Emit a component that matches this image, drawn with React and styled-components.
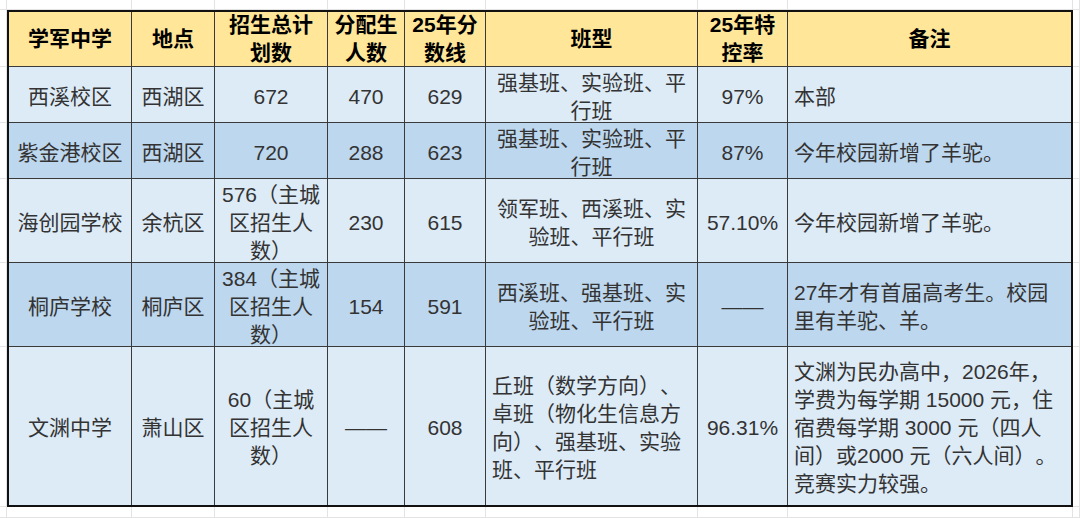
import React from "react";
import styled, { createGlobalStyle } from "styled-components";

const GlobalStyle = createGlobalStyle`
  html, body { margin: 0; padding: 0; background: #ffffff; }
  body { font-family: "Liberation Sans", "Noto Sans CJK SC", sans-serif; }
`;

// column widths (each includes its own 1px right rule)
const COLS = [123, 83, 113, 77, 81, 212, 90, 283];
// row heights (each includes its own 1px bottom rule)
const ROWS = [55, 56, 56, 84, 84, 158];
// spreadsheet grid-line tracks around the table
const GHOST_COLS = [7, 125, 83, 113, 77, 81, 212, 90, 285];
const GHOST_ROWS = [57, 56, 56, 84, 84, 160];

const HEAD = ["学军中学", "地点", "招生总计划数", "分配生人数", "25年分数线", "班型", "25年特控率", "备注"];

const DATA = [
  { name: "西溪校区", loc: "西湖区", plan: "672", alloc: "470", score: "629", cls: "强基班、实验班、平行班", rate: "97%", note: "本部" },
  { name: "紫金港校区", loc: "西湖区", plan: "720", alloc: "288", score: "623", cls: "强基班、实验班、平行班", rate: "87%", note: "今年校园新增了羊驼。" },
  { name: "海创园学校", loc: "余杭区", plan: "576（主城区招生人数）", alloc: "230", score: "615", cls: "领军班、西溪班、实验班、平行班", rate: "57.10%", note: "今年校园新增了羊驼。" },
  { name: "桐庐学校", loc: "桐庐区", plan: "384（主城区招生人数）", alloc: "154", score: "591", cls: "西溪班、强基班、实验班、平行班", rate: "——", note: "27年才有首届高考生。校园里有羊驼、羊。" },
  {
    name: "文渊中学", loc: "萧山区", plan: "60（主城区招生人数）", alloc: "——", score: "608",
    cls: "丘班（数学方向）、卓班（物化生信息方向）、强基班、实验班、平行班", clsLeft: true,
    rate: "96.31%",
    note: "文渊为民办高中，2026年，学费为每学期 15000 元，住宿费每学期 3000 元（四人间）或2000 元（六人间）。竞赛实力较强。",
  },
];

const Sheet = styled.div`
  display: flex;
  flex-direction: column;
  width: 1080px;
  height: 518px;
  overflow: hidden;
  background: #fff;
`;

const GhostRow = styled.div`
  display: grid;
  grid-template-columns: ${GHOST_COLS.map((c) => c + "px").join(" ")} 1fr;
  height: ${(p) => (p.$h ? p.$h + "px" : "auto")};
  flex: ${(p) => (p.$grow ? "1 1 auto" : "0 0 auto")};
`;

const GhostCol = styled.div`
  display: grid;
  grid-template-rows: ${GHOST_ROWS.map((r) => r + "px").join(" ")};
  width: ${(p) => (p.$w ? p.$w + "px" : "auto")};
  flex: ${(p) => (p.$w ? "0 0 auto" : "1 1 auto")};
`;

const GhostCell = styled.div`
  box-sizing: border-box;
  border-right: 1px solid #e3e3e3;
  border-bottom: 1px solid #e3e3e3;
`;

const Middle = styled.div`
  display: flex;
  flex: 0 0 auto;
`;

const Table = styled.div`
  display: grid;
  grid-template-columns: ${COLS.map((c) => c + "px").join(" ")};
  grid-template-rows: ${ROWS.map((r) => r + "px").join(" ")};
  border: 2px solid #111;
  flex: 0 0 auto;
`;

const BG = {
  head: "#ffe699",
  light: "#ddebf7",
  dark: "#bdd7ee",
};

const Cell = styled.div`
  box-sizing: border-box;
  display: flex;
  align-items: center;
  justify-content: ${(p) => (p.$left ? "flex-start" : "center")};
  text-align: ${(p) => (p.$left ? "left" : "center")};
  padding: ${(p) => (p.$head ? "0 6px" : "4px 6px 0")};
  background: ${(p) => BG[p.$tone]};
  border-right: ${(p) => (p.$lastCol ? "none" : "1px solid #3a3a3a")};
  border-bottom: ${(p) => (p.$lastRow ? "none" : "1px solid #3a3a3a")};
  font-size: 21px;
  line-height: 28px;
  color: ${(p) => (p.$head ? "#000" : "#333")};
  font-weight: ${(p) => (p.$head ? 700 : 400)};
  text-spacing-trim: space-all;
  word-break: normal;
  line-break: strict;
`;

function GhostStrip({ h, grow }) {
  return (
    <GhostRow $h={h} $grow={grow}>
      {Array.from({ length: GHOST_COLS.length + 1 }).map((_, i) => (
        <GhostCell key={i} />
      ))}
    </GhostRow>
  );
}

function GhostColumn({ w }) {
  return (
    <GhostCol $w={w}>
      {GHOST_ROWS.map((_, i) => (
        <GhostCell key={i} />
      ))}
    </GhostCol>
  );
}

export default function App() {
  const last = DATA.length - 1;
  return (
    <>
      <GlobalStyle />
      <Sheet>
        <GhostStrip h={10} />
        <Middle>
          <GhostColumn w={7} />
          <Table>
            {HEAD.map((h, i) => (
              <Cell key={h} $tone="head" $head $lastCol={i === HEAD.length - 1}>
                {h}
              </Cell>
            ))}
            {DATA.map((r, ri) => {
              const tone = ri % 2 === 0 ? "light" : "dark";
              const lr = ri === last;
              return (
                <React.Fragment key={r.name}>
                  <Cell $tone={tone} $lastRow={lr}>{r.name}</Cell>
                  <Cell $tone={tone} $lastRow={lr}>{r.loc}</Cell>
                  <Cell $tone={tone} $lastRow={lr}>{r.plan}</Cell>
                  <Cell $tone={tone} $lastRow={lr}>{r.alloc}</Cell>
                  <Cell $tone={tone} $lastRow={lr}>{r.score}</Cell>
                  <Cell $tone={tone} $lastRow={lr} $left={r.clsLeft}>{r.cls}</Cell>
                  <Cell $tone={tone} $lastRow={lr}>{r.rate}</Cell>
                  <Cell $tone={tone} $lastRow={lr} $lastCol $left>{r.note}</Cell>
                </React.Fragment>
              );
            })}
          </Table>
          <GhostColumn />
        </Middle>
        <GhostStrip grow />
      </Sheet>
    </>
  );
}
